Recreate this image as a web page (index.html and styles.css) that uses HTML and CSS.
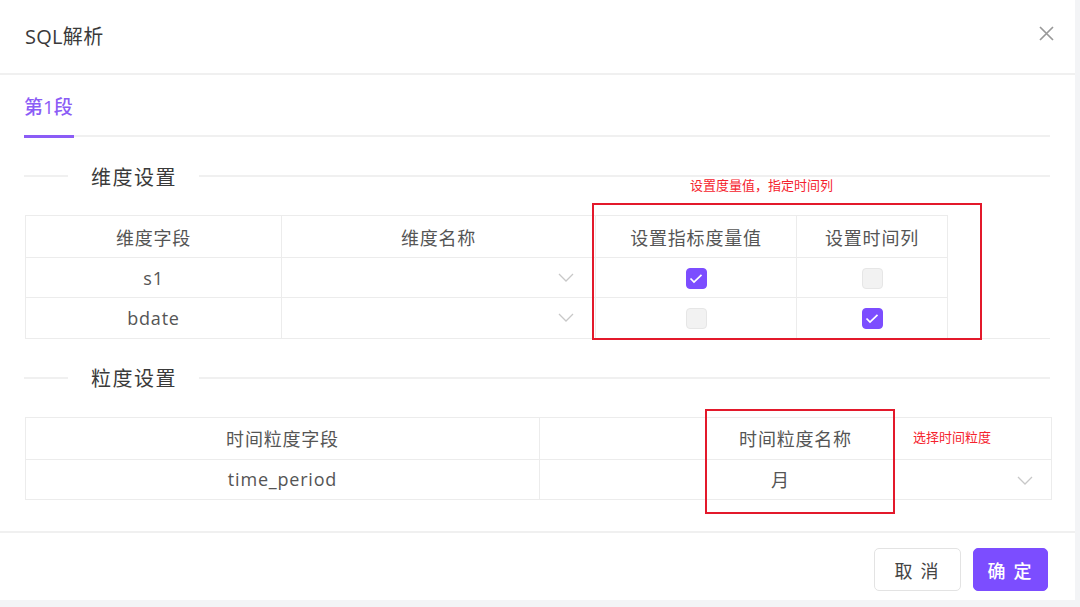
FILE: index.html
```html
<!DOCTYPE html>
<html lang="zh-CN">
<head>
<meta charset="utf-8">
<title>SQL解析</title>
<link rel="stylesheet" href="styles.css">
</head>
<body>
<div class="modal">
  <div class="modal-header">
    <span class="modal-title">SQL解析</span>
    <svg class="close" width="15" height="15" viewBox="0 0 15 15"><path d="M1 1L14 14M14 1L1 14" stroke="#999" stroke-width="1.7" fill="none"/></svg>
  </div>
  <div class="modal-body">
    <div class="tabs"><div class="tab active">第1段</div></div>

    <div class="section-title"><span class="line short"></span><span class="label">维度设置</span><span class="line long"></span></div>

    <div class="tbl-wrap">
      <table class="tbl dims">
        <colgroup><col class="c1"><col class="c2"><col class="c3"><col class="c4"></colgroup>
        <tr><th>维度字段</th><th>维度名称</th><th>设置指标度量值</th><th>设置时间列</th></tr>
        <tr>
          <td>s1</td>
          <td class="sel"><svg class="chev" width="16" height="9" viewBox="0 0 16 9"><path d="M1 1L8 8L15 1" stroke="#c8c8c8" stroke-width="1.3" fill="none"/></svg></td>
          <td><span class="cb checked"><svg width="14" height="11" viewBox="0 0 14 11"><path d="M1.5 5.5L5 9L12.5 1.8" stroke="#fff" stroke-width="1.7" fill="none"/></svg></span></td>
          <td><span class="cb"></span></td>
        </tr>
        <tr>
          <td>bdate</td>
          <td class="sel"><svg class="chev" width="16" height="9" viewBox="0 0 16 9"><path d="M1 1L8 8L15 1" stroke="#c8c8c8" stroke-width="1.3" fill="none"/></svg></td>
          <td><span class="cb"></span></td>
          <td><span class="cb checked"><svg width="14" height="11" viewBox="0 0 14 11"><path d="M1.5 5.5L5 9L12.5 1.8" stroke="#fff" stroke-width="1.7" fill="none"/></svg></span></td>
        </tr>
      </table>
    </div>

    <div class="section-title"><span class="line short"></span><span class="label">粒度设置</span><span class="line long"></span></div>

    <table class="tbl gran">
      <colgroup><col class="g1"><col class="g2"></colgroup>
      <tr><th>时间粒度字段</th><th>时间粒度名称</th></tr>
      <tr><td>time_period</td><td class="sel"><span class="val">月</span><svg class="chev" width="16" height="9" viewBox="0 0 16 9"><path d="M1 1L8 8L15 1" stroke="#c8c8c8" stroke-width="1.3" fill="none"/></svg></td></tr>
    </table>
  </div>
  <div class="modal-footer">
    <button class="btn">取 消</button>
    <button class="btn primary">确 定</button>
  </div>

  <div class="note note1">设置度量值，指定时间列</div>
  <div class="mark mark1"></div>
  <div class="note note2">选择时间粒度</div>
  <div class="mark mark2"></div>
</div>
</body>
</html>
```

FILE: styles.css
```css
* { box-sizing: border-box; }
html, body { margin: 0; padding: 0; }
body {
  background: #f3f4f6;
  font-family: "Open Sans", "Noto Sans CJK SC", sans-serif;
  color: #333;
}
.modal {
  position: relative;
  width: 1075px;
  height: 600px;
  background: #fff;
}
.modal-header {
  height: 75px;
  border-bottom: 2px solid #f0f0f0;
  display: flex;
  align-items: center;
  justify-content: space-between;
  padding: 0 21px 2px 25px;
}
.modal-title { font-size: 20px; color: #3a3a3a; letter-spacing: 0.3px; }
.close { margin-top: -4px; }
.modal-body { padding: 0 25px 0 25px; }
.tabs {
  height: 62px;
  border-bottom: 2px solid #f0f0f0;
  display: flex;
}
.tab {
  font-size: 19px;
  font-weight: 500;
  color: #8b5cf6;
  display: flex;
  align-items: center;
  padding-top: 2px;
  border-bottom: 3px solid #8b5cf6;
  margin-bottom: -2px;
  height: 63px;
  margin-left: -1px;
  padding-right: 1px;
}
.section-title {
  height: 78px;
  display: flex;
  align-items: center;
}
.section-title .line { height: 2px; background: #f0f0f0; }
.section-title .short { width: 44px; margin-left: -1px; }
.section-title .long { flex: 1; }
.section-title .label {
  font-size: 20px;
  letter-spacing: 1.5px;
  color: #3a3a3a;
  padding: 0 22px 0 23px;
}
.tbl-wrap { border-bottom: 1px solid #ececec; }
.tbl {
  border-collapse: collapse;
  table-layout: fixed;
  font-size: 18px;
  color: #555;
}
.dims { width: 922px; }
.dims .c1 { width: 256px; }
.dims .c2 { width: 314px; }
.dims .c3 { width: 201px; }
.dims .c4 { width: 151px; }
.tbl th, .tbl td {
  border: 1px solid #ececec;
  text-align: center;
  font-weight: 400;
  padding: 0;
  letter-spacing: 0.8px;
}
.tbl th { height: 42px; }
.tbl td { height: 40px; }
.dims tr:last-child td { border-bottom: none; }
.tbl td.sel { position: relative; }
.chev {
  position: absolute;
  right: 21px;
  top: 15px;
}
.cb {
  display: inline-block;
  width: 21px;
  height: 21px;
  border-radius: 4px;
  background: #f2f2f2;
  border: 1px solid #e6e6e6;
  vertical-align: middle;
  position: relative;
  top: -1px;
}
.cb.checked {
  background: #7c4dff;
  border-color: #7c4dff;
  display: inline-flex;
  align-items: center;
  justify-content: center;
}
.gran { width: 1026px; }
.gran .g1 { width: 514px; }
.gran .g2 { width: 512px; }
.gran td.sel .val { position: relative; left: -15px; }
.gran .chev { right: 18px; top: 16px; }
.modal-footer {
  position: absolute;
  left: 0; right: 0; bottom: 0;
  height: 69px;
  border-top: 2px solid #f0f0f0;
  display: flex;
  justify-content: flex-end;
  align-items: flex-start;
  gap: 12px;
  padding: 15px 27px 0 0;
}
.btn {
  height: 43px;
  border-radius: 5px;
  font-family: "Noto Sans CJK SC", sans-serif;
  font-size: 18px;
  letter-spacing: 2px;
  background: #fff;
  border: 1px solid #e3e3e3;
  color: #444;
  width: 87px;
  padding: 0;
}
.btn.primary {
  width: 75px;
  background: #7c4dff;
  border-color: #7c4dff;
  color: #fff;
  font-weight: 500;
}
.note {
  position: absolute;
  font-family: "Noto Sans CJK SC", sans-serif;
  font-size: 13px;
  color: #f5222d;
  line-height: 16px;
}
.note1 { left: 690px; top: 177px; }
.note2 { left: 913px; top: 429px; }
.mark {
  position: absolute;
  border: 2px solid #e3192b;
}
.mark1 { left: 592px; top: 203px; width: 390px; height: 137px; }
.mark2 { left: 705px; top: 409px; width: 190px; height: 105px; }
```
